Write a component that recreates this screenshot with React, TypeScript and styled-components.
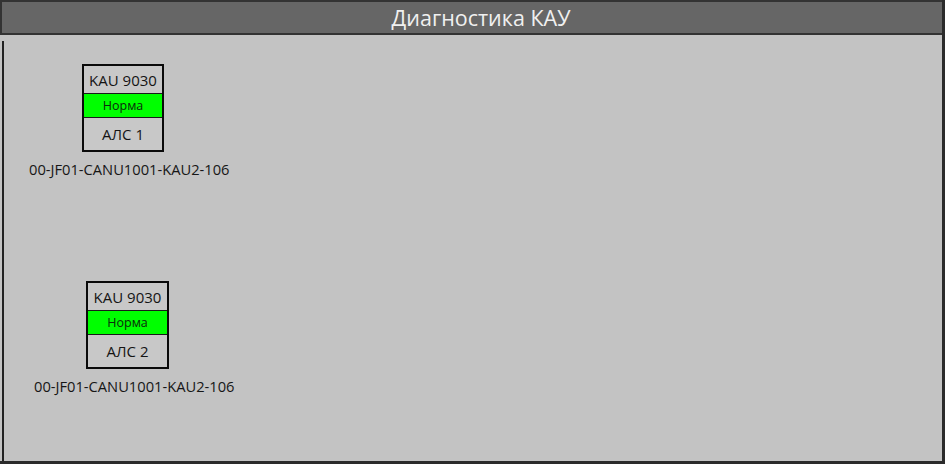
import React from "react";
import styled, { createGlobalStyle } from "styled-components";

const GlobalStyle = createGlobalStyle`
  html, body {
    margin: 0;
    padding: 0;
    background: #c3c3c3;
  }
  body {
    font-family: "Open Sans", "Noto Sans", "DejaVu Sans", sans-serif;
  }
`;

const Screen = styled.div`
  box-sizing: border-box;
  width: 945px;
  height: 464px;
  display: flex;
  flex-direction: column;
  background: #c3c3c3;
  border-right: 3px solid #2b2b2b;
  border-bottom: 3px solid #2b2b2b;
`;

const Header = styled.header`
  box-sizing: border-box;
  height: 35px;
  flex: none;
  display: flex;
  align-items: center;
  justify-content: center;
  padding-left: 18px;
  background: #666666;
  border: 2px solid #333333;
  border-right: none;
`;

const Title = styled.h1`
  margin: 0;
  font-size: 21.5px;
  font-weight: 400;
  color: #f0f0f0;
  line-height: 1;
  padding-top: 1px;
`;

const Body = styled.main`
  flex: 1;
  display: flex;
  padding: 6px 0 0 2px;
`;

const Canvas = styled.section`
  position: relative;
  flex: 1;
  border-left: 2px solid #222222;
`;

const Node = styled.div<{ $x: number; $y: number }>`
  position: absolute;
  left: ${(p) => p.$x}px;
  top: ${(p) => p.$y}px;
  display: flex;
  flex-direction: column;
  align-items: flex-start;
`;

const Device = styled.div<{ $offset: number; $w: number }>`
  box-sizing: border-box;
  margin-left: ${(p) => p.$offset}px;
  width: ${(p) => p.$w}px;
  height: 88px;
  border: 2px solid #0a0a0a;
  background: #c8c8c8;
  display: grid;
  grid-template-rows: 27px 24px 1fr;
`;

const Row = styled.div`
  display: flex;
  align-items: center;
  justify-content: center;
  font-size: 15px;
  color: #141414;
  & + & {
    border-top: 1px solid #1a1a1a;
  }
`;

const Status = styled(Row)`
  background: #00ff00;
  font-size: 12.5px;
  color: #0c2a0c;
`;

const Tag = styled.div`
  margin-top: 8px;
  font-size: 14.7px;
  line-height: 19px;
  color: #161616;
  white-space: nowrap;
`;

type Kau = {
  x: number;
  y: number;
  offset: number;
  w: number;
  model: string;
  state: string;
  line: string;
  tag: string;
};

const units: Kau[] = [
  { x: 25, y: 23, offset: 53, w: 82, model: "KAU 9030", state: "Норма", line: "АЛС 1", tag: "00-JF01-CANU1001-KAU2-106" },
  { x: 30, y: 240, offset: 52, w: 83, model: "KAU 9030", state: "Норма", line: "АЛС 2", tag: "00-JF01-CANU1001-KAU2-106" },
];

export default function App() {
  return (
    <>
      <GlobalStyle />
      <Screen>
        <Header>
          <Title>Диагностика КАУ</Title>
        </Header>
        <Body>
          <Canvas>
            {units.map((u) => (
              <Node key={u.line} $x={u.x} $y={u.y}>
                <Device $offset={u.offset} $w={u.w}>
                  <Row>{u.model}</Row>
                  <Status>{u.state}</Status>
                  <Row>{u.line}</Row>
                </Device>
                <Tag>{u.tag}</Tag>
              </Node>
            ))}
          </Canvas>
        </Body>
      </Screen>
    </>
  );
}
